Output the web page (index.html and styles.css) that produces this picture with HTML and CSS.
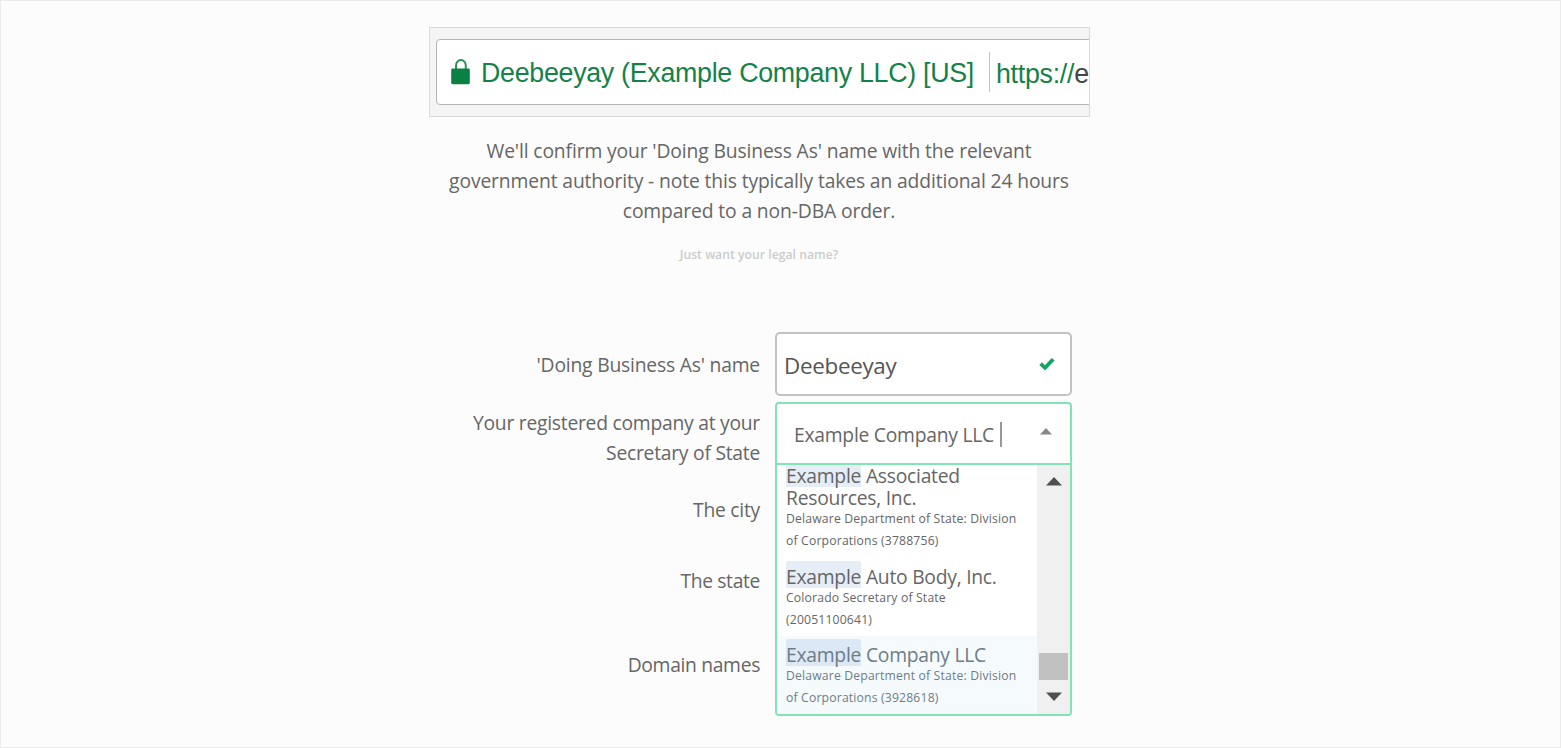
FILE: index.html
```html
<!DOCTYPE html>
<html lang="en">
<head>
<meta charset="utf-8">
<title>Company details</title>
<link rel="stylesheet" href="styles.css">
</head>
<body>
<main class="page">
  <div class="browser">
    <div class="address">
      <svg class="lock" width="20" height="27" viewBox="0 0 20 27"><path d="M5 12V6.4a4.9 5.4 0 0 1 9.8 0V12" fill="none" stroke="#2d9158" stroke-width="2"/><rect x=".2" y="9.6" width="18.6" height="15.6" rx="1.4" fill="#0b8043"/></svg>
      <span class="owner">Deebeeyay (Example Company LLC) [US]</span>
      <span class="divider"></span>
      <span class="url">https://<span class="host">e</span></span>
    </div>
  </div>
  <p class="note">We'll confirm your 'Doing Business As' name with the relevant<br>government authority - note this typically takes an additional 24 hours<br>compared to a non-DBA order.</p>
  <a class="legal">Just want your legal name?</a>
  <form class="form">
    <div class="labels">
      <label class="label dba">'Doing Business As' name</label>
      <label class="label company">Your registered company at your<br>Secretary of State</label>
      <label class="label city">The city</label>
      <label class="label state">The state</label>
      <label class="label domains">Domain names</label>
    </div>
    <div class="fields">
      <div class="input"><span class="value">Deebeeyay</span>
        <svg class="check" width="16" height="14" viewBox="0 0 16 14"><path d="M1.6 6.6 6 10.8 14.2 2.2" fill="none" stroke="#12a561" stroke-width="3.8"/></svg>
      </div>
      <div class="select">
        <div class="selected"><span class="chosen">Example Company LLC</span><span class="caret"></span>
          <svg class="arrow" width="12" height="7" viewBox="0 0 12 7"><path d="M0 6.5 6 0l6 6.5z" fill="#888"/></svg>
        </div>
        <div class="menu">
          <div class="options">
            <div class="option first"><div class="name"><mark>Example</mark> Associated<br>Resources, Inc.</div><div class="source">Delaware Department of State: Division<br>of Corporations (3788756)</div></div>
            <div class="option second"><div class="name"><mark>Example</mark> Auto Body, Inc.</div><div class="source">Colorado Secretary of State<br>(20051100641)</div></div>
            <div class="option active"><div class="name"><mark>Example</mark> Company LLC</div><div class="source">Delaware Department of State: Division<br>of Corporations (3928618)</div></div>
          </div>
          <div class="scrollbar">
            <svg width="16" height="9" viewBox="0 0 16 9"><path d="M0 8.5 8 0l8 8.5z" fill="#505050"/></svg>
            <span class="thumb"></span>
            <svg width="16" height="9" viewBox="0 0 16 9"><path d="M0 .5h16L8 9z" fill="#505050"/></svg>
          </div>
        </div>
      </div>
    </div>
  </form>
</main>
</body>
</html>
```
FILE: styles.css
```css
* { box-sizing: border-box; }
body { margin: 0; background: #fcfcfc; color: #666; font-family: "Open Sans", "Noto Sans", sans-serif; font-size: 19.3px; letter-spacing: -0.25px; }
.page { height: 748px; border: 1px solid #ebebeb; padding: 26px 0 0 428px; display: flex; flex-direction: column; align-items: flex-start; overflow: hidden; }
.browser { width: 661px; height: 90px; flex: none; border: 1px solid #dadada; background: #f4f4f4; padding: 11px 0 0 6px; overflow: hidden; }
.address { width: 700px; height: 66px; background: #fff; border: 1px solid #b5b5b5; border-radius: 4px; display: flex; padding-left: 14px; font-family: "Liberation Sans", Arial, sans-serif; font-size: 26.8px; letter-spacing: -0.29px; white-space: nowrap; color: #148248; }
.lock { margin-top: 19px; flex: none; }
.owner { margin-left: 10px; line-height: 66px; width: 493px; flex: none; }
.divider { width: 1px; height: 40px; margin: 12px 6px 0 15px; background: #c4c4c4; flex: none; }
.url { line-height: 68px; }
.host { color: #444; }
.note { margin: 19px 0 0; width: 660px; line-height: 30px; text-align: center; white-space: nowrap; letter-spacing: -0.13px; }
.legal { width: 660px; margin-top: 19px; line-height: 20px; text-align: center; font-size: 12.2px; font-weight: 600; color: #ccc; letter-spacing: 0.02px; }
.form { margin: 67px 0 0; display: flex; width: 643px; }
.labels { width: 331px; display: flex; flex-direction: column; text-align: right; line-height: 30px; }
.label { white-space: nowrap; }
.dba { margin-top: 18px; letter-spacing: -0.2px; }
.company { margin-top: 28px; }
.city { margin-top: 27px; }
.state { margin-top: 41px; letter-spacing: -0.35px; }
.domains { margin-top: 54px; letter-spacing: -0.33px; }
.fields { margin-left: 15px; width: 297px; }
.input { height: 64px; border: 2px solid #c2c2c2; border-radius: 5px; background: #fff; display: flex; align-items: center; justify-content: space-between; padding: 2px 15px 0 7px; font-size: 22.4px; color: #555; letter-spacing: -0.3px; }
.check { margin-bottom: 3px; }
.select { margin-top: 6px; border: 2px solid #82e3b4; border-radius: 4px; background: #fff; height: 314px; overflow: hidden; }
.selected { height: 61px; border-bottom: 2px solid #82e3b4; display: flex; align-items: center; padding: 2px 18px 0 17px; }
.caret { width: 2px; height: 25px; background: #999; margin-left: 6px; }
.arrow { margin-left: auto; margin-bottom: 6px; }
.menu { height: 249px; display: flex; }
.options { width: 260px; overflow: hidden; }
.option { padding-left: 9px; white-space: nowrap; }
.name { line-height: 22px; }
.source { font-size: 12.2px; line-height: 22px; letter-spacing: 0.17px; margin-top: -1px; }
.first { height: 92px; }
.second { height: 79px; padding-top: 9px; }
.active { height: 78px; padding-top: 8px; background: #f5fafd; color: #6d7d87; }
mark { padding-top: 2px; background: linear-gradient(#e5edf7, #e5edf7) 0 0 / 100% 27px no-repeat; color: inherit; border-radius: 2px; }
.active mark { background-image: linear-gradient(#dce8f5, #dce8f5); }
.scrollbar { width: 33px; background: #f0f0f0; display: flex; flex-direction: column; align-items: center; padding-top: 12px; }
.thumb { width: 29px; height: 27px; background: #c1c1c1; margin: 167px 0 12px; }
```
